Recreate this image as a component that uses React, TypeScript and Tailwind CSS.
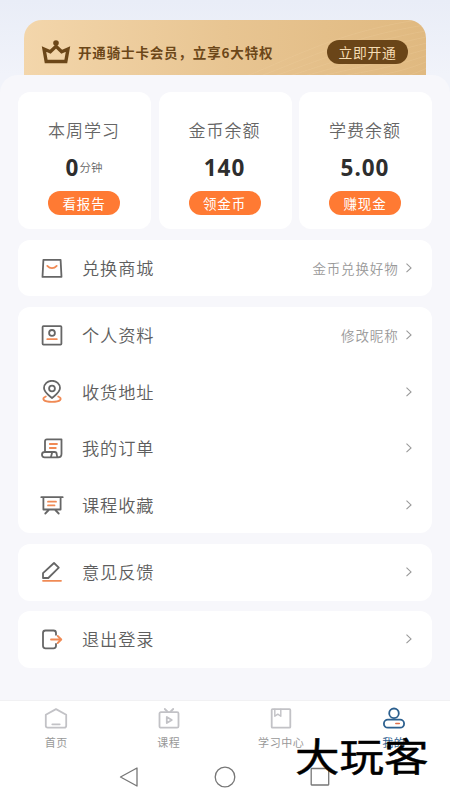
import React from 'react';

const DARK = '#666666';
const ORANGE = '#f08a55';

interface IconProps {
  children: React.ReactNode;
  color?: string;
  className?: string;
}

function Icon({ children, color = DARK, className = 'w-6 h-6' }: IconProps) {
  return (
    <svg
      viewBox="0 0 24 24"
      className={`shrink-0 ${className}`}
      fill="none"
      stroke={color}
      strokeWidth="1.8"
      strokeLinecap="round"
      strokeLinejoin="round"
    >
      {children}
    </svg>
  );
}

const BagIcon = () => (
  <Icon>
    <path d="M3.4 3.9h17.2l.9 17H2.5z" />
    <path d="M7.3 9.9c2.7 3 6.7 3 9.4 0" stroke={ORANGE} />
  </Icon>
);

const ProfileIcon = () => (
  <Icon>
    <rect x="2.6" y="3.2" width="18.8" height="18.4" rx=".8" />
    <circle cx="12" cy="9.9" r="2.9" />
    <path d="M7.3 16.2h9.5" stroke={ORANGE} />
  </Icon>
);

const AddressIcon = () => (
  <Icon>
    <path d="M5.8 16.500c-5 2.200-2.300 5.300 6.200 5.300s11.200-3.100 6.200-5.300" stroke={ORANGE} />
    <path d="M12 18c-3.800-3-8-5.700-8-9.900a8 7.300 0 0 1 16 0c0 4.200-4.200 6.900-8 9.900z" />
    <circle cx="12" cy="8.500" r="2.900" />
  </Icon>
);

const OrderIcon = () => (
  <Icon>
    <path d="M5 16V5.200c0-1.300.6-1.900 1.900-1.900h14.600v14.500c0 2.300-1.300 3.600-3.400 3.600H4.600c-3.500 0-3.500-5.400 0-5.400h9.900c1.500 0 2.200.9 2.200 2.300 0 1.700.5 2.600 1.500 3" />
    <path d="M12.200 16.200l-1.300 5" />
    <path d="M9.800 8h7.200M9.800 12h6" stroke={ORANGE} />
  </Icon>
);

const CourseIcon = () => (
  <Icon>
    <path d="M1.300 4.200h21.400M3.400 4.300v12.200h17.200V4.300M8.700 17l-3.400 3.500M15.300 17l3.400 3.500" />
    <path d="M8 8.700h8M8 12.400h6.500" stroke={ORANGE} />
  </Icon>
);

const FeedbackIcon = () => (
  <Icon>
    <path d="M3 18v-4.900L14 3l4.800 4.700L8.300 18z" />
    <path d="M3 20.800h18" stroke={ORANGE} />
  </Icon>
);

const LogoutIcon = () => (
  <Icon>
    <path d="M16 7.800V6c0-1.700-.8-2.500-2.500-2.500h-8C3.800 3.500 3 4.300 3 6v12.800c0 1.700.8 2.500 2.500 2.500h8c1.700 0 2.500-.8 2.500-2.500V17" />
    <path d="M11 12.500h10M17.700 9l3.600 3.500-3.600 3.500" stroke={ORANGE} />
  </Icon>
);

const HomeIcon = () => (
  <Icon color="#c2c2c6">
    <path d="M1.800 7.700L12 2.100l10.200 5.600v11c0 1.300-.6 1.900-1.900 1.900H3.700c-1.300 0-1.900-.6-1.900-1.900z" />
    <path d="M8.300 17.300h7.400" />
  </Icon>
);

const TvIcon = () => (
  <Icon color="#c2c2c6">
    <rect x="2.500" y="5.200" width="19" height="15.500" rx="1.400" />
    <path d="M7.800 2l3 3M16.200 2l-3 3M9.800 10v6l5-3z" />
  </Icon>
);

const BookIcon = () => (
  <Icon color="#c2c2c6">
    <rect x="2.700" y="2.100" width="18.600" height="18.600" rx=".8" />
    <path d="M5.800 2.300v7l3-2.200 3 2.200v-7" strokeWidth="1.400" />
  </Icon>
);

const MineIcon = () => (
  <Icon color="#2c608f">
    <circle cx="12" cy="6.300" r="4.800" />
    <rect x="1.900" y="12.700" width="20.200" height="8" rx="4" />
    <path d="M13.800 16.600h3.500" stroke="#e0704a" strokeWidth="1.500" />
  </Icon>
);

const stats = [
  { title: '本周学习', value: '0', unit: '分钟', action: '看报告' },
  { title: '金币余额', value: '140', action: '领金币' },
  { title: '学费余额', value: '5.00', action: '赚现金' },
];

const groups = [
  [{ label: '兑换商城', icon: BagIcon, hint: '金币兑换好物' }],
  [
    { label: '个人资料', icon: ProfileIcon, hint: '修改昵称' },
    { label: '收货地址', icon: AddressIcon },
    { label: '我的订单', icon: OrderIcon },
    { label: '课程收藏', icon: CourseIcon },
  ],
  [{ label: '意见反馈', icon: FeedbackIcon }],
  [{ label: '退出登录', icon: LogoutIcon }],
];

const tabs = [
  { label: '首页', icon: HomeIcon },
  { label: '课程', icon: TvIcon },
  { label: '学习中心', icon: BookIcon },
  { label: '我的', icon: MineIcon, active: true },
];

function MemberBanner() {
  return (
    <div className="relative mx-6 h-[55px] overflow-hidden rounded-t-[18px] bg-linear-to-r from-[#f3d6ab] via-[#e8c592] to-[#e0b980]">
      <svg className="absolute right-0 top-0 h-full w-[180px]" viewBox="0 0 180 55" fill="none" stroke="#f3d6a8" strokeOpacity=".25" strokeWidth=".8">
        {[0, 1, 2, 3, 4, 5, 6, 7, 8, 9].map((i) => (
          <path key={i} d={`M${i * 13 - 10} 60C${40 + i * 11} ${42 + i * 2} ${90 + i * 7} ${10 + i * 7} 185 ${i * 6 - 2}`} />
        ))}
      </svg>
      <div className="relative flex h-full items-center pl-[17px] pr-[18px] pt-[9px]">
        <svg viewBox="0 0 30 26" className="h-[26px] w-[30px] shrink-0" fill="none" stroke="#6c4719" strokeWidth="3.400" strokeLinejoin="miter">
          <path d="M3 10L5.200 22.500h19.600L27 10l-6.300 2.700L15 7.300l-5.700 5.400z" />
          <circle cx="15" cy="4" r="2.800" fill="#6c4719" stroke="none" />
        </svg>
        <span className="ml-[7px] whitespace-nowrap text-[13.500px] font-bold leading-5 tracking-[0.850px] text-[#6c4719]">开通骑士卡会员，立享6大特权</span>
        <button className="ml-auto h-6 w-[81px] rounded-full bg-[#6a4518] text-[13.800px] leading-6 tracking-[0.700px] text-[#f5dcb4]">立即开通</button>
      </div>
    </div>
  );
}

export default function App() {
  return (
    <div className="relative flex h-[800px] w-[450px] flex-col overflow-hidden bg-linear-to-b from-[#e9edf7] to-[#f1f3fa] to-[75px] pt-5 font-['Noto_Sans_CJK_SC',sans-serif]">
      <MemberBanner />

      <main className="flex h-[625px] shrink-0 flex-col gap-[10.500px] rounded-t-[18px] bg-[#f7f7fb] px-[18px] pt-[17px]">
        <div className="grid h-[137px] shrink-0 grid-cols-3 gap-[7.500px]">
          {stats.map((stat) => (
            <div key={stat.title} className="flex flex-col items-center rounded-[12px] bg-white pr-px pt-[26px]">
              <div className="text-[17px] font-[350] leading-6 tracking-[1px] text-[#666]">{stat.title}</div>
              <div className="mt-[12px] flex h-7 items-center text-[#2e2e2e]">
                <span className="font-['Noto_Sans',sans-serif] text-[22.500px] font-bold leading-7 tracking-[1px]">{stat.value}</span>
                {stat.unit && <span className="self-start text-[11.500px] font-[350] leading-[26px] text-[#666]">{stat.unit}</span>}
              </div>
              <button className="mt-[9px] h-6 w-[72px] rounded-full bg-[#ff7a33] text-[13.500px] leading-[25px] tracking-[0.800px] text-white">{stat.action}</button>
            </div>
          ))}
        </div>

        {groups.map((group) => (
          <section key={group[0].label} className="rounded-[12px] bg-white">
            {group.map((item) => (
              <div key={item.label} className="flex h-[56.700px] items-center pl-[22px] pr-[19px]">
                <item.icon />
                <span className="ml-[18px] text-[17.200px] font-[350] leading-7 tracking-[0.900px] text-[#5e5e5e]">{item.label}</span>
                {'hint' in item && <span className="ml-auto text-[13.500px] font-[350] tracking-[0.850px] text-[#999]">{item.hint}</span>}
                <svg viewBox="0 0 8 12" className={`h-3 w-2 shrink-0 ${'hint' in item ? 'ml-[6.500px]' : 'ml-auto'}`} fill="none" stroke="#999" strokeWidth="1.100">
                  <path d="M1.500 1.700L6 5.900l-4.500 4.200" />
                </svg>
              </div>
            ))}
          </section>
        ))}
      </main>

      <nav className="grid h-[53px] shrink-0 grid-cols-4 border-t border-[#f1f1f3] bg-white pt-[6px]">
        {tabs.map((tab) => (
          <div key={tab.label} className="flex flex-col items-center">
            <tab.icon />
            <span className={`mt-[3px] text-[11px] leading-4 tracking-[0.600px] ${tab.active ? 'text-[#2c608f]' : 'text-[#999]'}`}>{tab.label}</span>
          </div>
        ))}
      </nav>

      <div className="flex flex-1 justify-center gap-[74px] bg-white pt-[13px]">
        <svg viewBox="0 0 22 22" className="h-[22px] w-[22px]" fill="none" stroke="#777" strokeWidth="1.300" strokeLinejoin="round">
          <path d="M2.500 11L19 2v18z" />
        </svg>
        <svg viewBox="0 0 22 22" className="h-[22px] w-[22px]" fill="none" stroke="#777" strokeWidth="1.300">
          <circle cx="11" cy="11" r="9.800" />
        </svg>
        <svg viewBox="0 0 22 22" className="h-[22px] w-[22px]" fill="none" stroke="#777" strokeWidth="1.300">
          <rect x="1.200" y="2.500" width="17.500" height="16.500" rx=".5" />
        </svg>
      </div>

      <div className="absolute left-[295px] top-[733px] origin-top-left scale-x-[1.140] whitespace-nowrap text-[39px] font-normal leading-[42px] text-black [-webkit-text-stroke:0.500px_black]">大玩客</div>
    </div>
  );
}
